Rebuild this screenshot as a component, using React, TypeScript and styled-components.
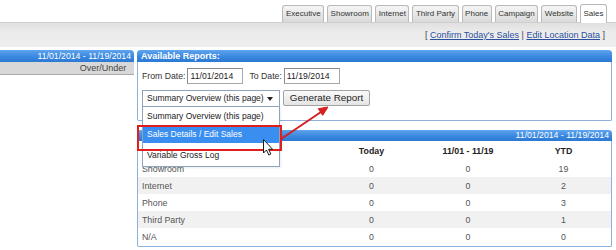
import styled, { createGlobalStyle } from "styled-components"

const GlobalStyle = createGlobalStyle`
	html, body {
		margin: 0;
		padding: 0;
		background: #ffffff;
		width: 616px;
		height: 250px;
		overflow: hidden;
	}
	body {
		font-family: "Liberation Sans", Arial, sans-serif;
		font-size: 9px;
		color: #333333;
	}
	* {
		box-sizing: border-box;
	}
`

const tabs = ["Executive", "Showroom", "Internet", "Third Party", "Phone", "Campaign", "Website", "Sales"]

const rows = [
	{ label: "Showroom", today: 0, range: 0, ytd: 19 },
	{ label: "Internet", today: 0, range: 0, ytd: 2 },
	{ label: "Phone", today: 0, range: 0, ytd: 3 },
	{ label: "Third Party", today: 0, range: 0, ytd: 1 },
	{ label: "N/A", today: 0, range: 0, ytd: 0 },
]

const options = ["Summary Overview (this page)", "Sales Details / Edit Sales", "Variable Gross Log"]

/*******************************************************/

export default function App() {
	return (
		<Page>
			<GlobalStyle />
			<TabBar>
				{tabs.map((tab) => (
					<Tab key={tab} $active={tab === "Sales"}>
						{tab}
					</Tab>
				))}
			</TabBar>
			<SubBar>
				[&nbsp;<Link>Confirm Today's Sales</Link>&nbsp;|&nbsp;<Link>Edit Location Data</Link>&nbsp;]
			</SubBar>

			<Content>
				<LeftPanel>
					<BlueHeader $align="right">11/01/2014 - 11/19/2014</BlueHeader>
					<GrayRow>
						<span />
						<span>Over/Under</span>
					</GrayRow>
				</LeftPanel>

				<MainColumn>
					<Panel $height={71}>
						<BlueHeader $bold>Available Reports:</BlueHeader>
						<FormBody>
							<FormRow>
								<Label>From Date:</Label>
								<DateInput>11/01/2014</DateInput>
								<Label $gap={6}>To Date:</Label>
								<DateInput>11/19/2014</DateInput>
							</FormRow>
							<FormRow>
								<SelectWrap>
									<SelectBox>Summary Overview (this page)</SelectBox>
									<DropList>
										{options.map((opt, i) => (
											<Option key={opt} $selected={i === 1} $last={i === options.length - 1}>
												{opt}
											</Option>
										))}
									</DropList>
								</SelectWrap>
								<Button>Generate Report</Button>
							</FormRow>
						</FormBody>
					</Panel>

					<Panel>
						<BlueHeader $align="right" $height={11}>11/01/2014 - 11/19/2014</BlueHeader>
						<Table>
							<colgroup>
								<col style={{ width: 185 }} />
								<col style={{ width: 97 }} />
								<col style={{ width: 96 }} />
								<col />
							</colgroup>
							<thead>
								<tr>
									<Th />
									<Th>Today</Th>
									<Th>11/01 - 11/19</Th>
									<Th>YTD</Th>
								</tr>
							</thead>
							<tbody>
								{rows.map((row, i) => (
									<Tr key={row.label} $alt={i % 2 === 1}>
										<LabelCell>{row.label}</LabelCell>
										<Cell>{row.today}</Cell>
										<Cell>{row.range}</Cell>
										<Cell>{row.ytd}</Cell>
									</Tr>
								))}
							</tbody>
						</Table>
					</Panel>
				</MainColumn>
			</Content>

			<Highlight />
			<Overlay width="616" height="250" viewBox="0 0 616 250">
				<line x1="281" y1="139" x2="321" y2="112" stroke="#d61f1f" strokeWidth="2" strokeLinecap="round" />
				<polygon points="328,107 322.7,115.3 318.3,108.7" fill="#d61f1f" stroke="#d61f1f" strokeWidth="1" strokeLinejoin="round" />
				<path
					d="M263.5 139.5 L263.5 153 L266.5 150 L268.8 155 L270.8 154.1 L268.6 149.3 L272.6 149.3 Z"
					fill="#ffffff"
					stroke="#1a1a1a"
					strokeWidth="1"
					strokeLinejoin="round"
				/>
			</Overlay>
		</Page>
	)
}

/*******************************************************/

const Page = styled.div`
	position: relative;
	width: 616px;
	height: 250px;
	overflow: hidden;
`

const TabBar = styled.div`
	display: flex;
	justify-content: flex-end;
	align-items: flex-end;
	gap: 3px;
	height: 22px;
	padding-right: 9px;
`

const Tab = styled.div<{ $active?: boolean }>`
	height: ${(p) => (p.$active ? "19px" : "17px")};
	line-height: ${(p) => (p.$active ? "18px" : "16px")};
	padding: 0 2.5px;
	font-size: 8px;
	color: #333333;
	border: 1px solid #b9b9b9;
	border-bottom: none;
	border-radius: 3px 3px 0 0;
	background: ${(p) => (p.$active ? "#ffffff" : "linear-gradient(#f6f6f6, #d9d9d9)")};
	margin-bottom: ${(p) => (p.$active ? "-1px" : "0")};
	position: relative;
	z-index: 1;
`

const SubBar = styled.div`
	display: flex;
	justify-content: flex-end;
	align-items: center;
	height: 25px;
	padding-right: 11px;
	font-size: 9px;
	color: #444444;
	border-top: 1px solid #cfcfcf;
	background: linear-gradient(#e0e0e0, #ececec 40%, #eeeeee);
`

const Link = styled.a`
	color: #2b4f9e;
	text-decoration: underline;
`

const Content = styled.div`
	display: flex;
	gap: 3px;
	padding-top: 3px;
`

const LeftPanel = styled.div`
	width: 134px;
	display: flex;
	flex-direction: column;
`

const BlueHeader = styled.div<{ $align?: string; $bold?: boolean; $height?: number }>`
	height: ${(p) => p.$height || 12}px;
	line-height: ${(p) => p.$height || 12}px;
	padding: 0 3px 0 4px;
	text-align: ${(p) => p.$align || "left"};
	font-weight: ${(p) => (p.$bold ? "bold" : "normal")};
	font-size: ${(p) => (p.$bold ? "9px" : "8.7px")};
	color: #ffffff;
	background: linear-gradient(#5fa4ee, #3a88e0 55%, #2c79d4);
	border-radius: 0 4px 0 0;
`

const GrayRow = styled.div`
	display: grid;
	grid-template-columns: 72px 1fr;
	height: 13px;
	line-height: 12px;
	background: #d8d8d8;
	border-bottom: 1px solid #a9a9a9;
	color: #444444;
	text-align: center;
`

const MainColumn = styled.div`
	width: 475px;
	display: flex;
	flex-direction: column;
	gap: 9px;
`

const Panel = styled.div<{ $height?: number }>`
	position: relative;
	height: ${(p) => (p.$height ? `${p.$height}px` : "auto")};
	border: 1px solid #8db0dc;
	border-top: none;
	border-radius: 4px 4px 2px 2px;

	& > ${BlueHeader} {
		border-radius: 4px 4px 0 0;
		margin: 0 -1px;
	}
`

const FormBody = styled.div`
	display: flex;
	flex-direction: column;
	gap: 6px;
	padding: 6px 4px 0 4px;
`

const FormRow = styled.div`
	display: flex;
	align-items: center;
	height: 16px;
`

const Label = styled.span<{ $gap?: number }>`
	font-size: 8.7px;
	color: #333333;
	margin-left: ${(p) => p.$gap || 0}px;
	margin-right: 2px;
`

const DateInput = styled.div`
	width: 56px;
	height: 16px;
	line-height: 14px;
	padding-left: 2px;
	font-size: 8.7px;
	color: #222222;
	background: #ffffff;
	border: 1px solid #a8a8a8;
	border-top-color: #8a8a8a;
	border-left-color: #8a8a8a;
`

const SelectWrap = styled.div`
	position: relative;
	z-index: 3;
`

const SelectBox = styled.div`
	position: relative;
	width: 138px;
	height: 17px;
	line-height: 15px;
	padding-left: 4px;
	font-size: 8.5px;
	color: #222222;
	background: #ffffff;
	border: 1px solid #8ea3bd;

	&::after {
		content: "";
		position: absolute;
		right: 6px;
		top: 6px;
		border-left: 3px solid transparent;
		border-right: 3px solid transparent;
		border-top: 4px solid #222222;
	}
`

const DropList = styled.div`
	position: absolute;
	top: 16px;
	left: 0;
	width: 138px;
	padding: 0 0 1px;
	background: #ffffff;
	border: 1px solid #8ea3bd;
	box-shadow: 1px 1px 2px rgba(0, 0, 0, 0.08);
`

const Option = styled.div<{ $selected?: boolean; $last?: boolean }>`
	height: ${(p) => (p.$last ? "22px" : "18px")};
	line-height: ${(p) => (p.$last ? "24px" : "18px")};
	padding-left: 4px;
	font-size: 8.5px;
	color: ${(p) => (p.$selected ? "#ffffff" : "#222222")};
	background: ${(p) => (p.$selected ? "#3a8ef0" : "transparent")};
`

const Button = styled.div`
	margin-left: 3px;
	width: 87px;
	height: 16px;
	line-height: 14px;
	text-align: center;
	font-size: 9.9px;
	color: #222222;
	border: 1px solid #a3a3a3;
	border-radius: 2px;
	background: linear-gradient(#fafafa, #e4e4e4);
`

const Table = styled.table`
	width: 100%;
	border-collapse: collapse;
	table-layout: fixed;
	font-size: 8.8px;
	margin-bottom: 1px;
`

const Th = styled.th`
	height: 19px;
	padding: 0;
	font-weight: bold;
	color: #222222;
	text-align: center;
`

const Tr = styled.tr<{ $alt?: boolean }>`
	height: 17px;
	background: ${(p) => (p.$alt ? "#f1f1f1" : "#ffffff")};
`

const Cell = styled.td`
	padding: 0;
	text-align: center;
	color: #555555;
`

const LabelCell = styled(Cell)`
	text-align: left;
	padding-left: 4px;
`

const Highlight = styled.div`
	position: absolute;
	left: 137px;
	top: 125px;
	width: 145px;
	height: 26px;
	border: 2px solid #e01e1e;
	z-index: 4;
	pointer-events: none;
`

const Overlay = styled.svg`
	position: absolute;
	left: 0;
	top: 0;
	z-index: 5;
	pointer-events: none;
`
